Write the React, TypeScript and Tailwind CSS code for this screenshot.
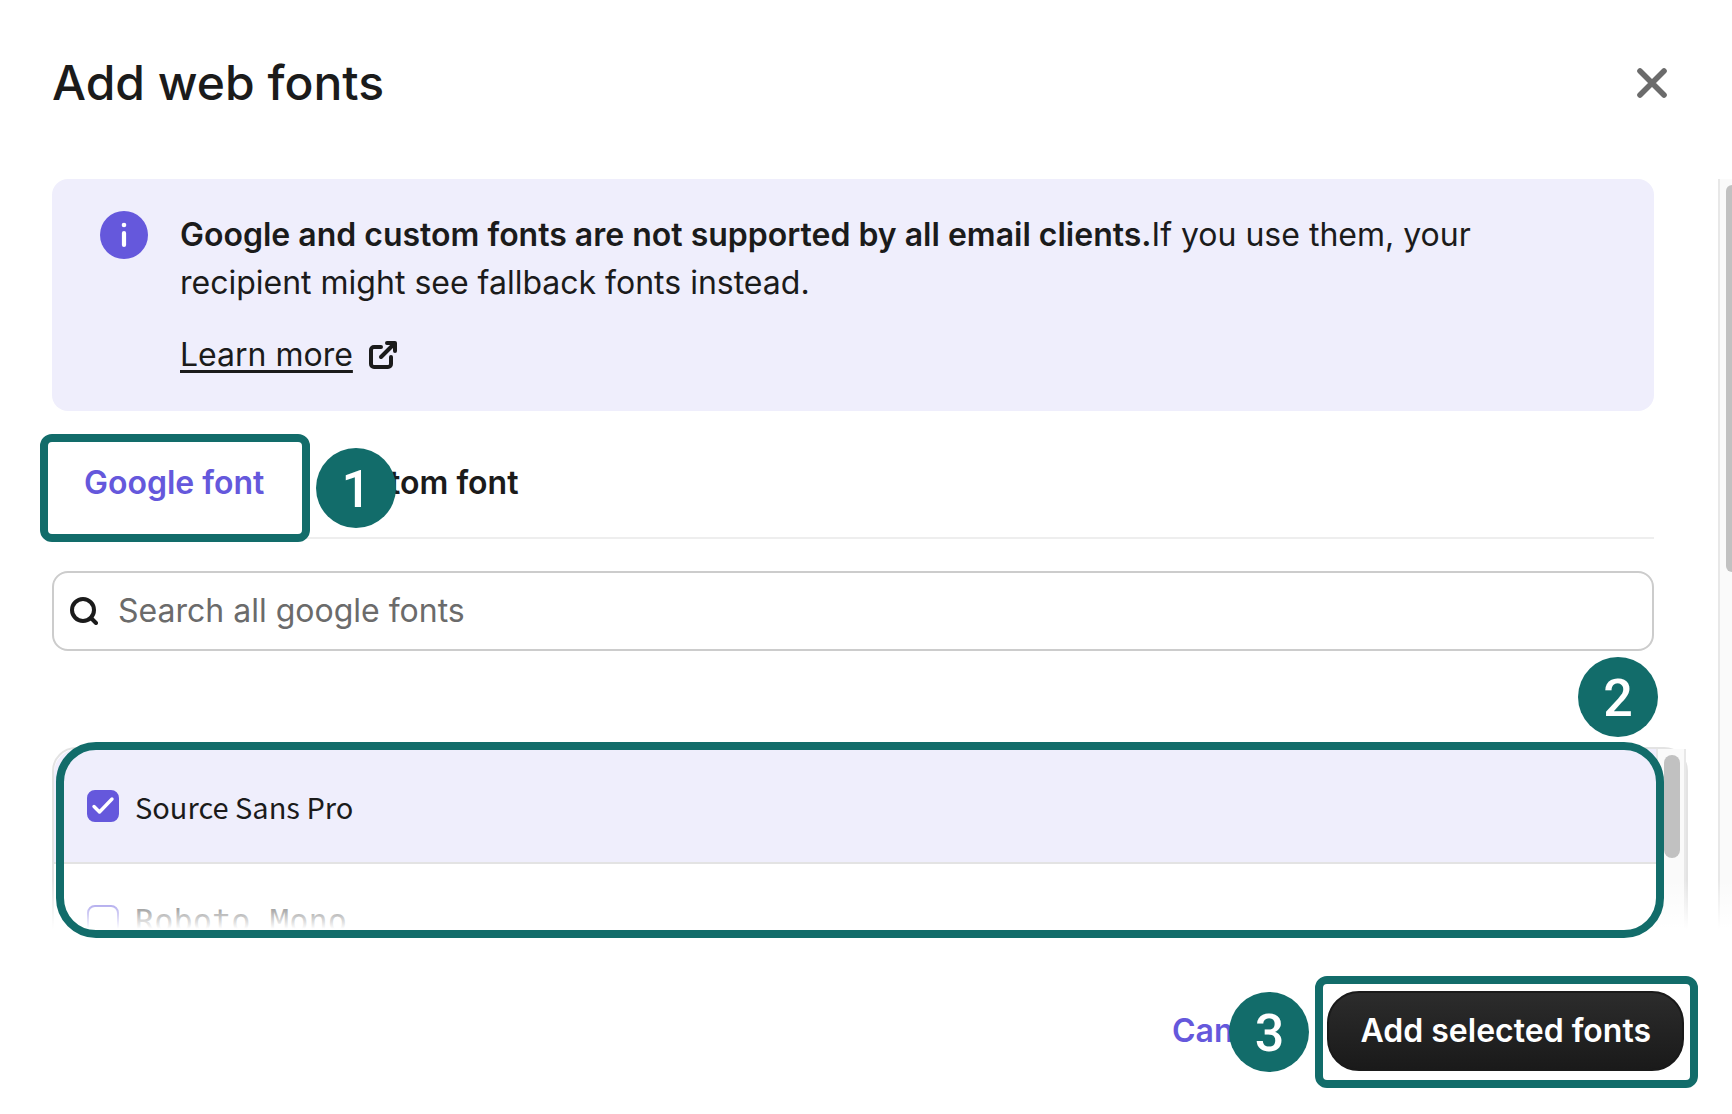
import { useState } from "react";
import type { ReactNode } from "react";

interface FontOption {
  id: string;
  name: string;
  className: string;
}

const FONTS: FontOption[] = [
  { id: "source-sans-pro", name: "Source Sans Pro", className: "font-['Noto_Sans_CJK_SC',sans-serif] text-[29px]" },
  { id: "roboto-mono", name: "Roboto Mono", className: "font-['DejaVu_Sans_Mono',monospace] text-[32px]" },
];

// numbered marker of the walkthrough
function StepBadge({ children, className }: { children: ReactNode; className: string }) {
  return (
    <span
      className={`absolute z-20 flex size-20 items-center justify-center rounded-full bg-[#126c6a] pt-[3px] font-[Roboto,sans-serif] text-[52px] leading-none font-medium text-white ${className}`}
    >
      {children}
    </span>
  );
}

function StepFrame({ className }: { className: string }) {
  return <span className={`pointer-events-none absolute z-10 border-8 border-[#126c6a] ${className}`} />;
}

function InfoIcon() {
  return (
    <svg viewBox="0 0 48 48" className="size-12 shrink-0" aria-hidden="true">
      <circle cx="24" cy="24" r="24" fill="#6558dc" />
      <circle cx="24" cy="14" r="2.3" fill="#fff" />
      <path d="M24 22v12" stroke="#fff" strokeWidth="4.2" strokeLinecap="round" />
    </svg>
  );
}

function ExternalIcon() {
  return (
    <svg viewBox="0 0 28 28" className="size-7" fill="none" stroke="#1b1b1b" strokeWidth="4" strokeLinecap="round" strokeLinejoin="round" aria-hidden="true">
      <path d="M12 6H5a3 3 0 0 0-3 3v14a3 3 0 0 0 3 3h14a3 3 0 0 0 3-3v-7" />
      <path d="M12 16 25 3" />
      <path d="M18 2h8v8" />
    </svg>
  );
}

function FontRow({ font, checked, onToggle }: { font: FontOption; checked: boolean; onToggle: () => void }) {
  return (
    <label
      htmlFor={font.id}
      className={`flex h-[115px] items-center gap-4 border-b-2 border-[#e3e3e3] pr-8 pl-[33px] first:rounded-tl-3xl ${checked ? "bg-[#efeefc]" : "bg-white"}`}
    >
      <span className="relative size-8 shrink-0">
        <input
          id={font.id}
          type="checkbox"
          checked={checked}
          onChange={onToggle}
          className="block size-8 appearance-none rounded-lg border-2 border-[#6558dc] bg-white checked:bg-[#6558dc]"
        />
        {checked && (
          <svg viewBox="0 0 32 32" className="pointer-events-none absolute inset-0 size-8" fill="none" aria-hidden="true">
            <path d="M7 16.5 12.5 22 25 9" stroke="#fff" strokeWidth="3.4" strokeLinecap="round" strokeLinejoin="round" />
          </svg>
        )}
      </span>
      <span className={`leading-8 ${font.className}`}>{font.name}</span>
    </label>
  );
}

export default function App() {
  const [selected, setSelected] = useState<string[]>(["source-sans-pro"]);
  const [query, setQuery] = useState("");
  const [tab, setTab] = useState("google");

  const toggle = (id: string) =>
    setSelected((prev) => (prev.includes(id) ? prev.filter((f) => f !== id) : [...prev, id]));

  return (
    <div className="flex h-screen flex-col overflow-hidden bg-white font-[Inter,sans-serif] text-[32px] leading-[48px] text-[#1b1b1b]">
      {/* Header */}
      <header className="flex h-[179px] shrink-0 items-start justify-between pt-[51px] pr-[60px] pl-[52px]">
        <h1 className="text-[48px] leading-16 font-medium">Add web fonts</h1>
        <button type="button" aria-label="Close" className="flex h-16 w-10 items-center justify-center">
          <svg viewBox="0 0 30 30" className="size-[30px]" fill="none" stroke="#6b6b6b" strokeWidth="5.6" strokeLinecap="round" aria-hidden="true">
            <path d="M3 3 27 27M27 3 3 27" />
          </svg>
        </button>
      </header>

      {/* Scrolling body */}
      <main className="relative flex min-h-0 flex-1 overflow-hidden">
        <div className="min-w-0 flex-1 pr-[30px] pl-[52px]">
          <div className="mr-[34px]">
            <section className="flex gap-8 rounded-2xl bg-[#efeefc] px-12 py-8">
              <InfoIcon />
              <div className="max-w-[1320px]">
                <p>
                  <strong className="font-semibold">Google and custom fonts are not supported by all email clients.</strong>
                  If you use them, your recipient might see fallback fonts instead.
                </p>
                <a href="#learn-more" className="mt-6 flex w-fit items-center gap-4">
                  <span className="underline decoration-3 underline-offset-4">Learn more</span>
                  <ExternalIcon />
                </a>
              </div>
            </section>

            <div role="tablist" className="relative mt-4 flex border-b-2 border-[#eeeeee] font-semibold">
              <div className="relative">
                <button
                  type="button"
                  role="tab"
                  aria-selected={tab === "google"}
                  onClick={() => setTab("google")}
                  className={`px-8 pt-8 pb-[30px] ${tab === "google" ? "text-[#6558dc]" : ""}`}
                >
                  Google font
                </button>
                <StepFrame className="top-[7px] -right-[14px] -bottom-[5px] -left-3 rounded-xl" />
              </div>
              <div className="relative">
                <button
                  type="button"
                  role="tab"
                  aria-selected={tab === "custom"}
                  onClick={() => setTab("custom")}
                  className={`px-8 pt-8 pb-[30px] ${tab === "custom" ? "text-[#6558dc]" : ""}`}
                >
                  Custom font
                </button>
                <StepBadge className="top-[21px] left-5">1</StepBadge>
              </div>
            </div>

            <div className="relative mt-8">
              <label className="flex h-20 items-center gap-5 rounded-2xl border-2 border-[#cccccc] px-4">
                <svg viewBox="0 0 28 28" className="size-7 shrink-0" fill="none" stroke="#1b1b1b" strokeWidth="4" strokeLinecap="round" aria-hidden="true">
                  <circle cx="13" cy="13" r="11" />
                  <path d="m21 21 5 5" />
                </svg>
                <input
                  type="text"
                  aria-label="Search all google fonts"
                  placeholder="Search all google fonts"
                  value={query}
                  onChange={(e) => setQuery(e.target.value)}
                  className="min-w-0 flex-1 bg-transparent outline-none placeholder:text-[#6b6b6b]"
                />
              </label>
              <StepBadge className="top-[86px] -right-1">2</StepBadge>
            </div>
          </div>

          {/* Font list */}
          <div className="relative mt-24">
            <div className="flex h-[340px] rounded-3xl border-2 border-[#e3e3e3]">
              <div className="min-w-0 flex-1">
                {FONTS.map((font) => (
                  <FontRow
                    key={font.id}
                    font={font}
                    checked={selected.includes(font.id)}
                    onToggle={() => toggle(font.id)}
                  />
                ))}
              </div>
              <div className="w-[30px] border-x-2 border-[#e8e8e8] bg-[#fafafa] pt-[6px] pl-[6px]">
                <div className="h-[103px] w-4 rounded-full bg-[#c1c1c1]" />
              </div>
            </div>
            <StepFrame className="-top-[5px] right-6 left-1 h-[196px] rounded-[40px]" />
          </div>
        </div>

        <div className="w-[14px] shrink-0 border-l-2 border-[#e8e8e8] bg-[#fafafa] pt-[6px] pl-[6px]">
          <div className="h-[387px] w-[6px] rounded-l-lg bg-[#c1c1c1]" />
        </div>

        {/* fade at the bottom edge */}
        <div className="pointer-events-none absolute inset-x-0 bottom-0 h-[60px] bg-linear-to-b from-white/0 to-white to-83%" />
      </main>

      {/* Footer */}
      <footer className="flex h-[175px] shrink-0 items-start justify-end gap-4 pt-[52px] pr-12 font-semibold">
        <div className="relative">
          <button type="button" className="h-20 px-8 text-[#6558dc]">
            Cancel
          </button>
          <StepBadge className="top-px right-[2px]">3</StepBadge>
        </div>
        <div className="relative">
          <button
            type="button"
            className="h-20 rounded-[32px] border-2 border-[#1a1a1a] bg-linear-to-b from-[#2c2c2c] to-[#1a1a1a] px-[31px] text-white"
          >
            Add selected fonts
          </button>
          <StepFrame className="-top-[15px] -right-[14px] -bottom-[17px] -left-3 rounded-xl" />
        </div>
      </footer>
    </div>
  );
}
